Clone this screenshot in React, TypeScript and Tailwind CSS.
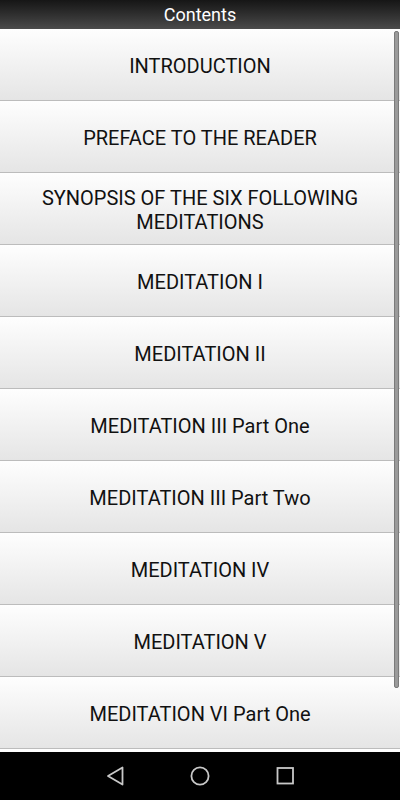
import React from "react";

const items = [
  "INTRODUCTION",
  "PREFACE TO THE READER",
  "SYNOPSIS OF THE SIX FOLLOWING MEDITATIONS",
  "MEDITATION I",
  "MEDITATION II",
  "MEDITATION III Part One",
  "MEDITATION III Part Two",
  "MEDITATION IV",
  "MEDITATION V",
  "MEDITATION VI Part One",
  "",
];

export default function App() {
  return (
    <div
      className="w-[400px] h-[800px] flex flex-col bg-white overflow-hidden"
      style={{ fontFamily: "Roboto, 'Liberation Sans', sans-serif" }}
    >
      <div className="h-[29px] shrink-0 flex items-center justify-center bg-gradient-to-b from-[#161616] to-[#4b4b4b] text-white text-[18px] leading-none">
        Contents
      </div>
      <div className="flex-1 relative overflow-hidden">
        <div className="flex flex-col">
          {items.map((t, i) => (
            <div
              key={i}
              className="h-[72px] shrink-0 flex items-center justify-center px-8 pt-[2px] text-center text-[20px] leading-[24px] text-[#111] bg-gradient-to-b from-[#fefefe] to-[#e5e5e5] border-b border-[#bcbcbc]"
            >
              {t}
            </div>
          ))}
        </div>
        <div className="absolute right-[1px] top-[2px] w-[5px] h-[657px] rounded-[2px] bg-[#9a9a9a] border border-[#7a7a7a]" />
      </div>
      <div className="h-[48px] shrink-0 bg-black flex items-center pl-[105px] gap-[65px]">
        <svg width="20" height="20" viewBox="0 0 20 20">
          <path d="M17.5 1.5 L17.5 18.5 L3 10 Z" fill="none" stroke="#c8c8c8" strokeWidth="1.8" strokeLinejoin="round" />
        </svg>
        <svg width="20" height="20" viewBox="0 0 20 20">
          <circle cx="10" cy="10" r="8.6" fill="none" stroke="#c8c8c8" strokeWidth="1.8" />
        </svg>
        <svg width="20" height="20" viewBox="0 0 20 20">
          <rect x="2.5" y="2" width="15.5" height="15.5" fill="none" stroke="#c8c8c8" strokeWidth="1.8" />
        </svg>
      </div>
    </div>
  );
}
